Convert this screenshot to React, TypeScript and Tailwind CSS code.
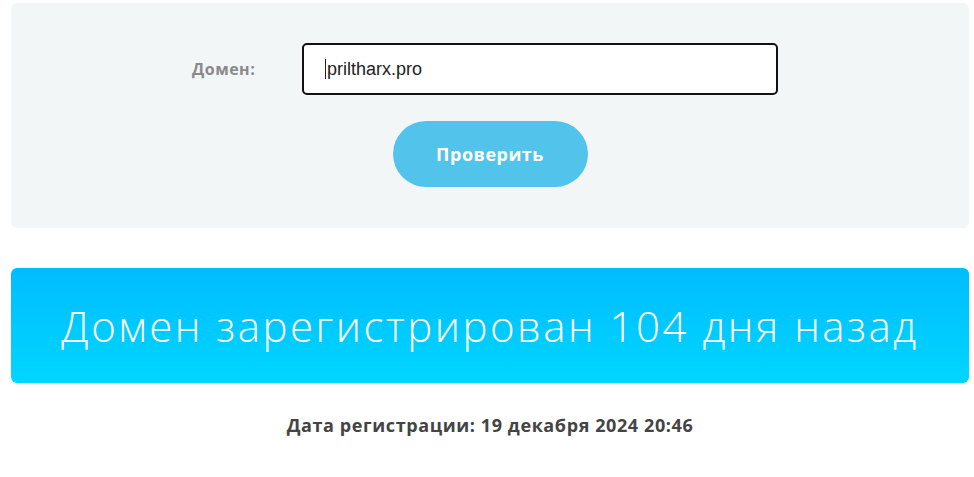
export default function App() {
  return (
    <div className="min-h-[477px] bg-white pl-[11px] pr-[5px] pt-[3px]" style={{ fontFamily: '"Open Sans", "Noto Sans", sans-serif' }}>
      <div className="h-[225px] rounded-[6px] bg-[#f3f6f7] pt-[40px]">
        <div className="flex items-center pl-[181px]">
          <label className="w-[110px] text-[16px] font-bold tracking-[0.5px] text-[#8a8a8a]">Домен:</label>
          <div className="flex h-[52px] w-[476px] items-center rounded-[5px] border-2 border-[#111] bg-white pl-[21px] text-[18px] text-[#222]" style={{ fontFamily: '"Liberation Sans", Arial, sans-serif' }}>
            <span className="mr-[1px] inline-block h-[20px] w-[1px] bg-[#222]" />
            priltharx.pro
          </div>
        </div>
        <div className="mt-[26px] flex justify-center">
          <button className="h-[66px] w-[195px] rounded-full bg-[#52c3ea] text-[18px] font-bold tracking-[0.5px] text-white">
            Проверить
          </button>
        </div>
      </div>
      <div className="mt-[40px] flex h-[115px] items-center justify-center rounded-[6px] bg-gradient-to-b from-[#00bcff] to-[#00d6ff]">
        <h1 className="text-[42px] font-light tracking-[2.5px] text-white">Домен зарегистрирован 104 дня назад</h1>
      </div>
      <p className="mt-[29px] text-center text-[18px] font-bold tracking-[0.6px] text-[#444]">Дата регистрации: 19 декабря 2024 20:46</p>
    </div>
  );
}
